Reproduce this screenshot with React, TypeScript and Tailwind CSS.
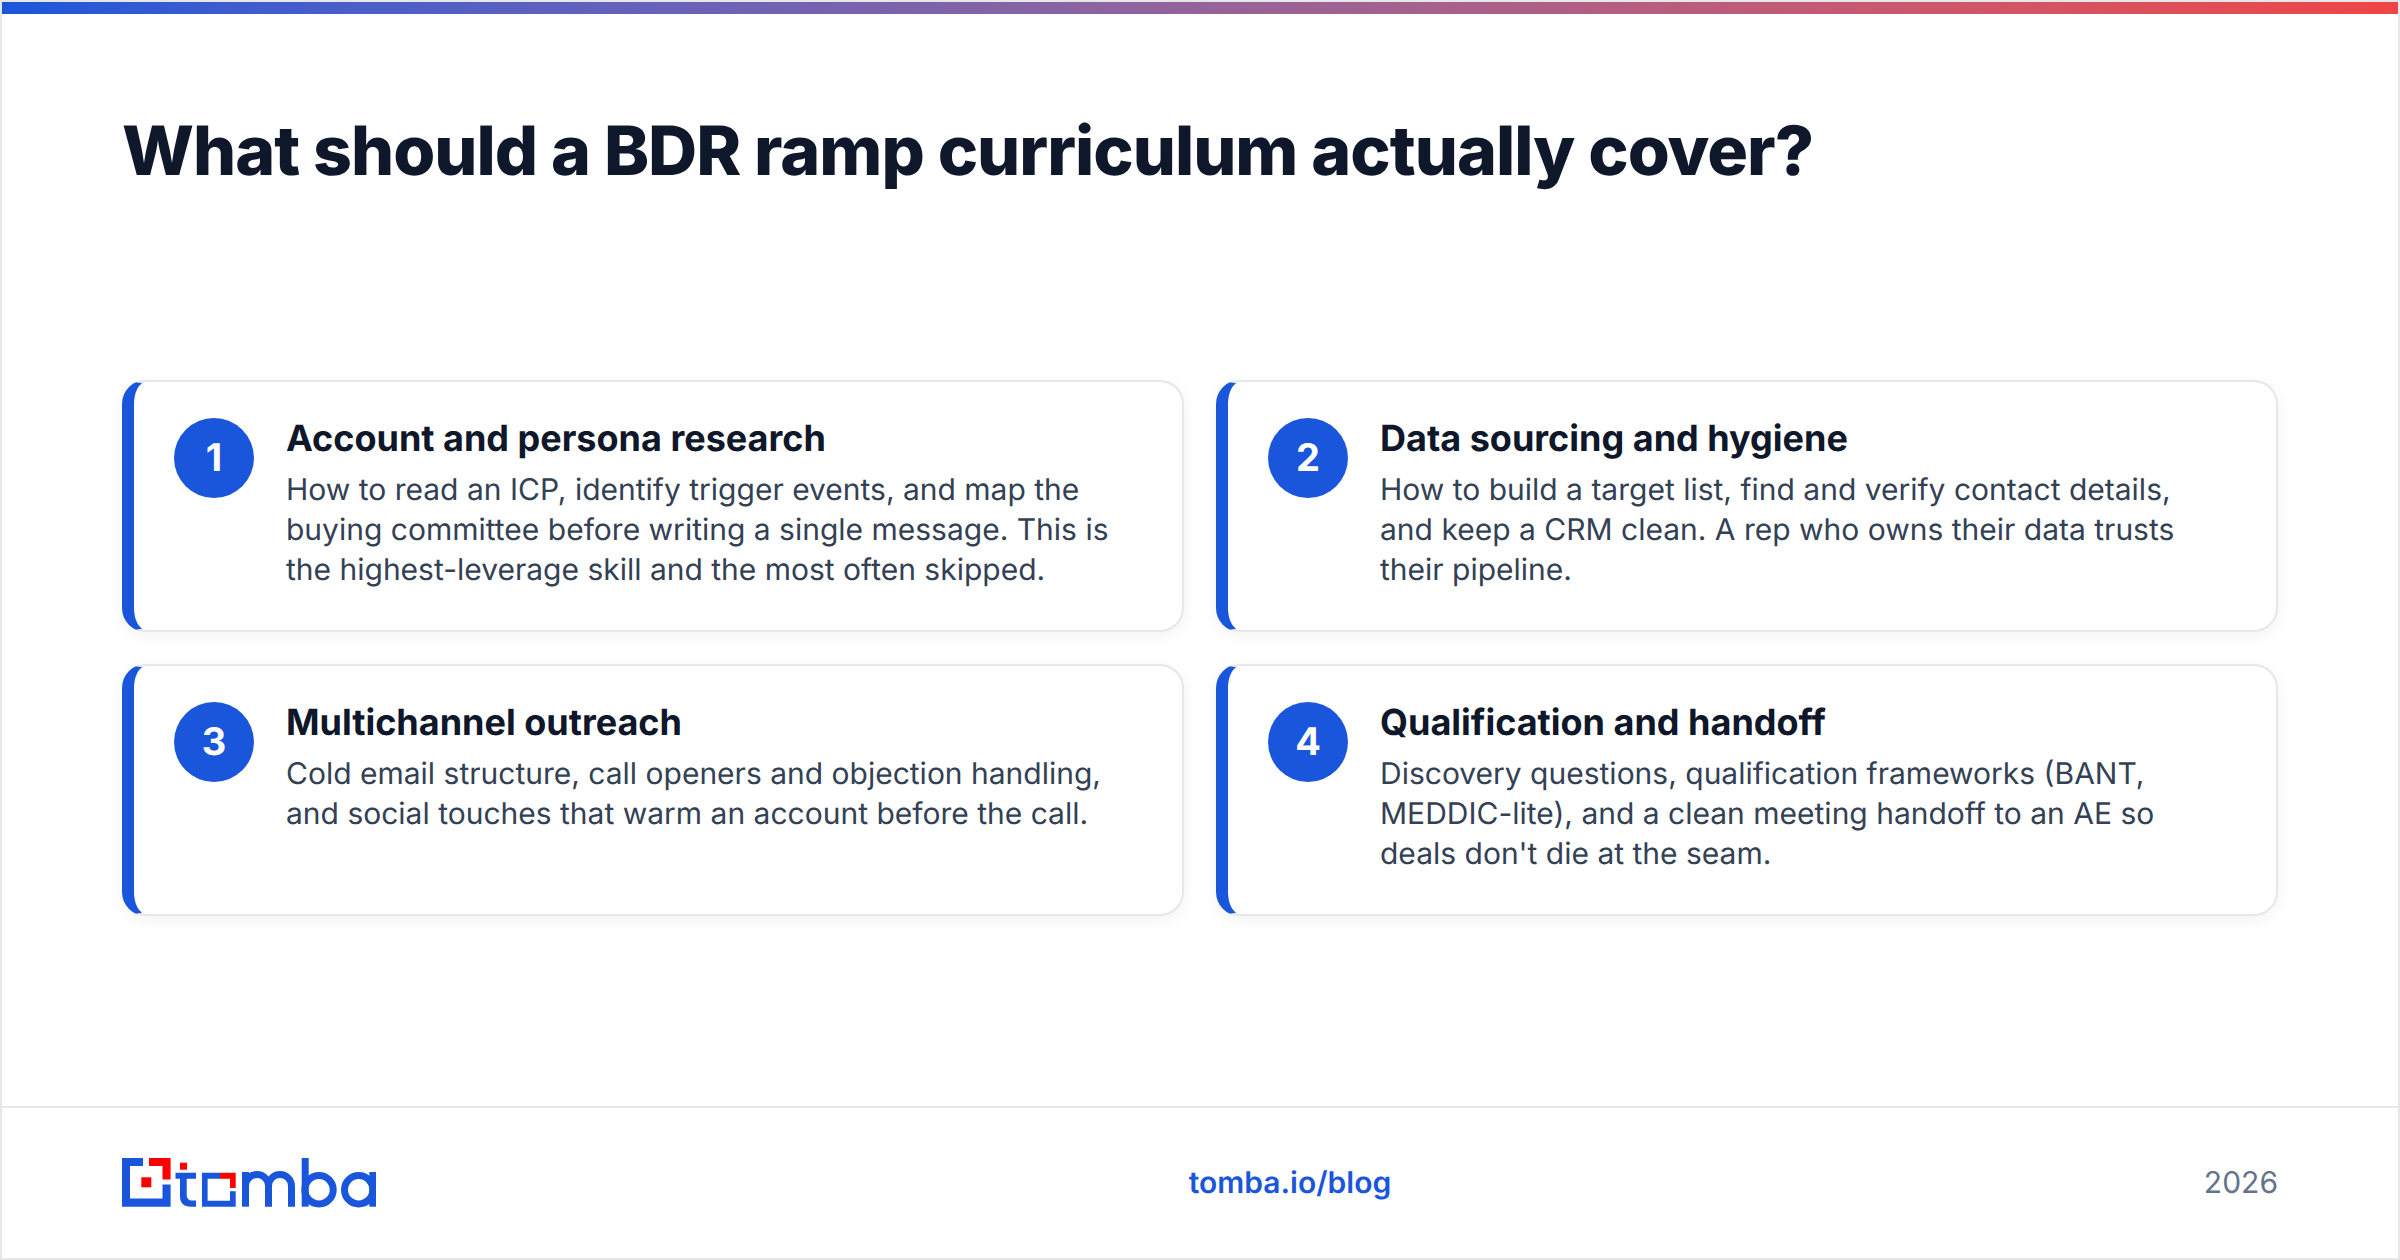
import React from 'react';

const steps = [
  {
    n: 1,
    title: 'Account and persona research',
    lines: [
      'How to read an ICP, identify trigger events, and map the',
      'buying committee before writing a single message. This is',
      'the highest-leverage skill and the most often skipped.',
    ],
  },
  {
    n: 2,
    title: 'Data sourcing and hygiene',
    lines: [
      'How to build a target list, find and verify contact details,',
      'and keep a CRM clean. A rep who owns their data trusts',
      'their pipeline.',
    ],
  },
  {
    n: 3,
    title: 'Multichannel outreach',
    lines: [
      'Cold email structure, call openers and objection handling,',
      'and social touches that warm an account before the call.',
    ],
  },
  {
    n: 4,
    title: 'Qualification and handoff',
    lines: [
      'Discovery questions, qualification frameworks (BANT,',
      "MEDDIC-lite), and a clean meeting handoff to an AE so",
      "deals don't die at the seam.",
    ],
  },
];

const TombaLogo = () => (
  <svg width="254" height="50" viewBox="0 0 254 50" aria-label="tomba">
    <g fill="#1a56db">
      <path d="M0 0H21V8H8V40.5H40.5V26.5H48.6V48.7H0Z" />
      <path d="M53.5 14.7H74V20.7H64.7V36.5Q64.7 42.5 70 42.5H74V48.7H69Q58 48.7 58 38V20.7H53.5Z" />
      <path d="M80 14.7H98V20.7H85.6V42.7H108V33.3H113.7V48.7H80Z" />
    </g>
    <g fill="#ff0000">
      <path d="M27 0H48.6V21.5H40.5V8H27Z" />
      <rect x="19.3" y="19.3" width="10" height="10" />
      <rect x="58" y="4.7" width="7" height="7" />
      <path d="M98 14.7H113.7V30H108V20.7H98Z" />
    </g>
    <g fill="none" stroke="#1a56db" strokeWidth="7">
      <path d="M123.5 48.7V14" />
      <path d="M123.5 28a11.5 11.5 0 0 1 23 0V48.7" />
      <path d="M146.5 28a11.5 11.5 0 0 1 23 0V48.7" />
      <path d="M183.2 0V48.7" />
      <circle cx="197" cy="31.7" r="14.2" />
      <circle cx="236.7" cy="31.7" r="14.2" />
      <path d="M250.8 14V48.7" />
    </g>
  </svg>
);

export default function App() {
  return (
    <div className="w-[2400px] h-[1260px] border-2 border-[#e5e7eb] bg-white flex flex-col font-['Inter',sans-serif] [text-rendering:geometricPrecision]">
      <div className="h-3 shrink-0 bg-gradient-to-r from-[#1a56db] to-[#ef4444]" />

      <main className="flex-1 px-[120px] pt-[96px]">
        <h1 className="text-[68px] leading-[82px] font-extrabold text-[#0f172a] tracking-[-1px]">
          What should a BDR ramp curriculum actually cover?
        </h1>
        <div className="grid grid-cols-2 gap-8 mt-[188px]">
          {steps.map((step) => (
            <div
              key={step.n}
              className="h-[252px] flex gap-8 rounded-3xl border-2 border-l-[12px] border-[#e5e7eb] border-l-[#1a56db] bg-white pl-10 pt-9 shadow-[0_4px_16px_rgba(15,23,42,0.05)]"
            >
              <div className="w-20 h-20 shrink-0 rounded-full bg-[#1a56db] text-white flex items-center justify-center text-[38px] font-bold">
                {step.n}
              </div>
              <div>
                <h3 className="text-[36px] leading-10 font-bold text-[#0f172a]">{step.title}</h3>
                <p className="mt-3 text-[30px] leading-10 text-[#334155]">
                  {step.lines.map((line) => (
                    <span key={line} className="block whitespace-nowrap">{line}</span>
                  ))}
                </p>
              </div>
            </div>
          ))}
        </div>
      </main>

      <footer className="h-[152px] shrink-0 border-t-2 border-[#e5e7eb] px-[120px] flex justify-between items-center">
        <TombaLogo />
        <span className="text-[30px] font-semibold text-[#1a56db]">tomba.io/blog</span>
        <span className="text-[30px] text-[#64748b]">2026</span>
      </footer>
    </div>
  );
}
